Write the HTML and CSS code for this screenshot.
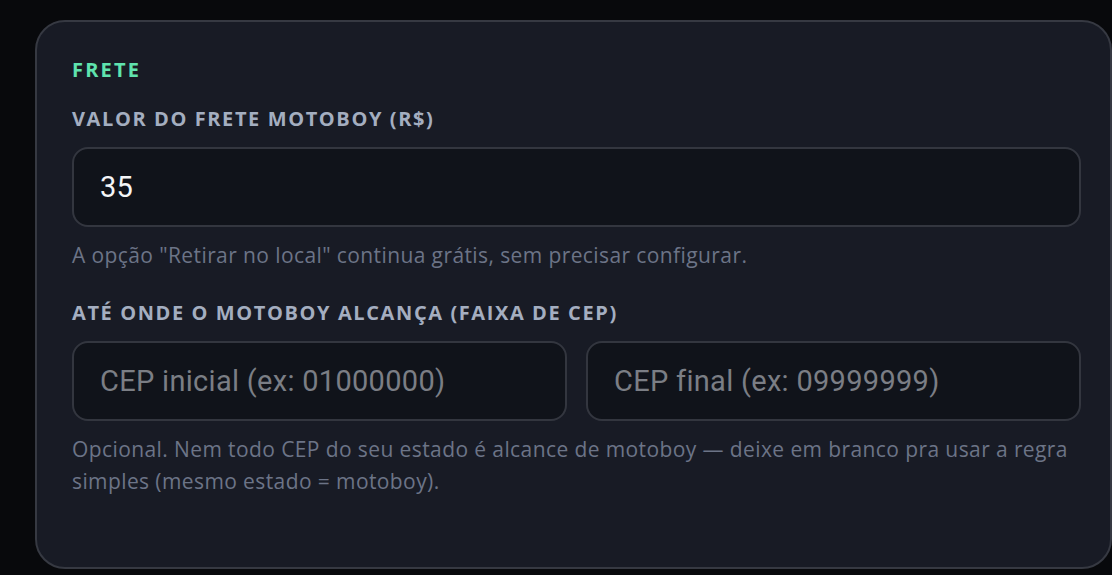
FILE: index.html
```html
<!DOCTYPE html>
<html lang="pt-BR">
<head>
    <meta charset="UTF-8">
    <meta name="viewport" content="width=device-width, initial-scale=1.0">
    <title>Frete</title>
    <link rel="stylesheet" href="styles.css">
</head>
<body>
    <div class="card">
        <div class="section-title">FRETE</div>

        <label class="field-label" for="valorFrete">VALOR DO FRETE MOTOBOY (R$)</label>
        <input type="text" class="field-input" id="valorFrete" value="35" inputmode="decimal">
        <p class="hint">A opção "Retirar no local" continua grátis, sem precisar configurar.</p>

        <label class="field-label" for="cepInicial">ATÉ ONDE O MOTOBOY ALCANÇA (FAIXA DE CEP)</label>
        <div class="cep-row">
            <input type="text" class="field-input" id="cepInicial" placeholder="CEP inicial (ex: 01000000)" inputmode="numeric">
            <input type="text" class="field-input" id="cepFinal" placeholder="CEP final (ex: 09999999)" inputmode="numeric">
        </div>
        <p class="hint">Opcional. Nem todo CEP do seu estado é alcance de motoboy — deixe em branco pra usar a regra simples (mesmo estado = motoboy).</p>
    </div>
</body>
</html>
```

FILE: styles.css
```css
* {
    margin: 0;
    padding: 0;
    box-sizing: border-box;
}

body {
    font-family: 'Open Sans', 'Noto Sans', sans-serif;
    background: #08090c;
    height: 100vh;
    overflow: hidden;
    padding: 20px 0 0 35px;
}

.card {
    background: #181b25;
    border: 2px solid #363942;
    border-radius: 30px;
    width: 1077px;
    height: 549px;
    padding: 36px 29px 0 35px;
}

.section-title {
    color: #5fe3ae;
    font-size: 20px;
    font-weight: 700;
    letter-spacing: 2.2px;
    line-height: 24px;
    margin-bottom: 25px;
}

.field-label {
    display: block;
    color: #a4aec0;
    font-size: 20px;
    font-weight: 700;
    letter-spacing: 1.6px;
    line-height: 24px;
    margin-bottom: 16px;
}

.field-input {
    display: block;
    width: 100%;
    height: 80px;
    background: #10131a;
    border: 2px solid #33363f;
    border-radius: 16px;
    padding: 0 26px;
    font-family: 'Roboto', sans-serif;
    font-size: 29px;
    letter-spacing: 0.3px;
    color: #f4f5f7;
    outline: none;
}

.field-input::placeholder {
    color: #7b7e85;
}

.cep-row {
    display: grid;
    grid-template-columns: 1fr 1fr;
    gap: 19px;
}

.hint {
    color: #6c7487;
    font-size: 21px;
    line-height: 32px;
    letter-spacing: 0.4px;
    margin: 12px 0 30px;
}
```
